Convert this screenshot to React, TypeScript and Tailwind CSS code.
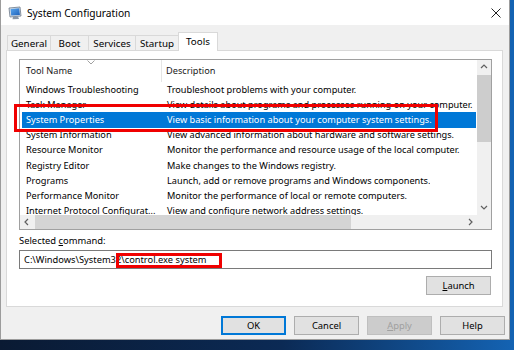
import React from "react";

const rows: [string, string][] = [
  ["Windows Troubleshooting", "Troubleshoot problems with your computer."],
  ["Task Manager", "View details about programs and processes running on your computer."],
  ["System Properties", "View basic information about your computer system settings."],
  ["System Information", "View advanced information about hardware and software settings."],
  ["Resource Monitor", "Monitor the performance and resource usage of the local computer."],
  ["Registry Editor", "Make changes to the Windows registry."],
  ["Programs", "Launch, add or remove programs and Windows components."],
  ["Performance Monitor", "Monitor the performance of local or remote computers."],
  ["Internet Protocol Configurat...", "View and configure network address settings."],
];

function Chevron({ dir }: { dir: "up" | "down" | "left" | "right" }) {
  const d = {
    up: "M1 5 L4 2 L7 5",
    down: "M1 2 L4 5 L7 2",
    left: "M5 1 L2 4 L5 7",
    right: "M3 1 L6 4 L3 7",
  }[dir];
  return (
    <svg width="8" height="8" viewBox="0 0 8 8">
      <path d={d} fill="none" stroke="#606060" strokeWidth="1.2" />
    </svg>
  );
}

function AppIcon() {
  return (
    <svg width="15" height="14" viewBox="0 0 15 14">
      <defs>
        <linearGradient id="scr" x1="0" y1="0" x2="1" y2="1">
          <stop offset="0" stopColor="#5aa8f0" />
          <stop offset="1" stopColor="#1d5fb8" />
        </linearGradient>
      </defs>
      <path d="M1 2 L12 1 L13 10 L2 11 Z" fill="#d9e0e8" stroke="#6a7788" strokeWidth="0.8" />
      <path d="M2.6 3 L11.2 2.3 L11.9 9 L3.2 9.6 Z" fill="url(#scr)" />
      <path d="M5 11 L10 10.6 L11 13 L4.5 13.3 Z" fill="#8a96a6" />
    </svg>
  );
}

function Btn({
  children,
  variant,
}: {
  children: React.ReactNode;
  variant?: "default" | "disabled";
}) {
  const cls =
    variant === "default"
      ? "border-2 border-[#0078d7] bg-[#e1e1e1] text-black"
      : variant === "disabled"
      ? "border border-[#bfbfbf] bg-[#cccccc] text-[#a0a0a0]"
      : "border border-[#adadad] bg-[#e1e1e1] text-black";
  return (
    <div className={`w-[65px] h-[19px] flex items-center justify-center ${cls}`}>
      {children}
    </div>
  );
}

export default function App() {
  return (
    <div className="relative w-[514px] h-[350px] overflow-hidden bg-[linear-gradient(90deg,#0a1a33_0%,#0b2a55_55%,#1463b3_100%)] [font-family:'Noto_Sans',sans-serif] text-[9.4px] text-black leading-[14px]">
      <div className="w-[510px] h-[340px] flex flex-col border-l border-r border-b border-[#9c9c9c] bg-[#f0f0f0]">
        {/* Title bar */}
        <div className="h-[25px] shrink-0 bg-white flex items-center pl-[7px] pr-[8px]">
          <AppIcon />
          <span className="ml-[4px] text-[10.2px] text-black">System Configuration</span>
          <svg className="ml-auto" width="10" height="10" viewBox="0 0 10 10">
            <path d="M0.5 0.5 L9.5 9.5 M9.5 0.5 L0.5 9.5" stroke="#222" strokeWidth="1" />
          </svg>
        </div>

        {/* Body */}
        <div className="flex-1 flex flex-col pl-[5px]">
          {/* Tabs */}
          <div className="mt-[7px] h-[19px] flex items-end -mb-px relative z-10 pl-[1px] text-[9.8px]">
            <div className="w-[43px] h-[16px] border-l border-t border-[#d9d9d9] flex items-center justify-center">General</div>
            <div className="w-[38px] h-[16px] border-l border-t border-[#d9d9d9] flex items-center justify-center">Boot</div>
            <div className="w-[47px] h-[16px] border-l border-t border-[#d9d9d9] flex items-center justify-center">Services</div>
            <div className="w-[43px] h-[16px] border-l border-t border-[#d9d9d9] flex items-center justify-center">Startup</div>
            <div className="w-[40px] h-[19px] border-l border-t border-r border-[#d9d9d9] bg-white flex items-center justify-center pb-[1px]">Tools</div>
          </div>

          {/* Panel */}
          <div className="w-[497px] h-[257px] border border-[#d9d9d9] bg-white flex flex-col pl-[12px] pt-[8px]">
            {/* List view */}
            <div className="w-[473px] h-[171px] border border-[#a0a0a0] flex flex-col bg-white text-[9.2px]">
              <div className="flex flex-1 min-h-0">
                <div className="flex-1 min-w-0 overflow-hidden relative">
                  <div className="h-[22px] flex relative text-[#1a1a1a]">
                    <div className="w-[142px] shrink-0 pl-[6px] border-r border-[#e5e5e5] flex items-center">Tool Name</div>
                    <div className="pl-[4px] flex items-center">Description</div>
                    <svg className="absolute left-[67px] top-[0px]" width="8" height="5" viewBox="0 0 8 5">
                      <path d="M0.5 0.5 L4 4 L7.5 0.5" fill="none" stroke="#a0a0a0" strokeWidth="1" />
                    </svg>
                  </div>
                  {rows.map(([name, desc], i) => (
                    <div
                      key={name}
                      className={`h-[15.2px] flex items-center ml-[2px] mr-[1px] whitespace-nowrap ${
                        i === 2 ? "bg-[#0078d7] text-white" : ""
                      }`}
                    >
                      <div className="w-[140px] shrink-0 pl-[4px] overflow-hidden">{name}</div>
                      <div className="pl-[5px] min-w-0 overflow-hidden">{desc}</div>
                    </div>
                  ))}
                </div>
                {/* vertical scrollbar */}
                <div className="w-[14px] shrink-0 flex flex-col bg-[#f0f0f0]">
                  <div className="h-[14px] flex items-center justify-center"><Chevron dir="up" /></div>
                  <div className="flex-1">
                    <div className="mt-[1px] h-[67px] bg-[#cdcdcd]" />
                  </div>
                  <div className="h-[14px] flex items-center justify-center"><Chevron dir="down" /></div>
                </div>
              </div>
              {/* horizontal scrollbar */}
              <div className="h-[14px] shrink-0 flex bg-[#f0f0f0]">
                <div className="w-[14px] flex items-center justify-center"><Chevron dir="left" /></div>
                <div className="flex-1 flex items-stretch">
                  <div className="ml-[1px] w-[316px] bg-[#d4d4d4]" />
                </div>
                <div className="w-[14px] flex items-center justify-center"><Chevron dir="right" /></div>
                <div className="w-[14px]" />
              </div>
            </div>

            {/* Selected command */}
            <div className="mt-[4px] h-[14px] flex items-center whitespace-pre">
              <span>Selected </span>
              <span className="underline">c</span>
              <span>ommand:</span>
            </div>
            <div className="mt-[2px] w-[473px] h-[19px] border border-[#7a7a7a] bg-white flex items-center pl-[4px] text-[9.3px]">
              C:\Windows\System32\control.exe system
            </div>
            <div className="mt-[7px] w-[473px] flex justify-end pr-[1px]">
              <Btn>
                <span className="underline">L</span>aunch
              </Btn>
            </div>
          </div>

          {/* Bottom buttons */}
          <div className="mt-[9px] flex justify-end gap-[8px] pr-[4px]">
            <Btn variant="default">OK</Btn>
            <Btn>Cancel</Btn>
            <Btn variant="disabled">
              <span className="underline">A</span>pply
            </Btn>
            <Btn>Help</Btn>
          </div>
        </div>
      </div>

      {/* Red annotation boxes */}
      <div className="absolute left-[14px] top-[104px] w-[424px] h-[28px] border-[3px] border-[#f00000]" />
      <div className="absolute left-[116px] top-[253px] w-[106px] h-[15px] border-[3px] border-[#f00000]" />
    </div>
  );
}
